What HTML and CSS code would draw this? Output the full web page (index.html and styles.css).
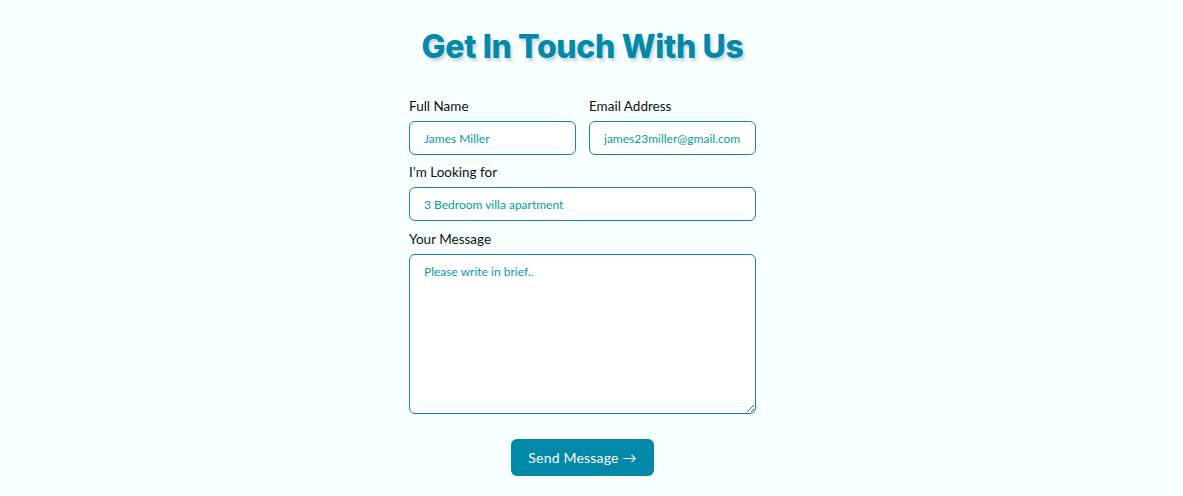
FILE: index.html
```html
<!DOCTYPE html>
<html lang="en">
<head>
<meta charset="utf-8">
<title>Get In Touch With Us</title>
<link rel="stylesheet" href="styles.css">
</head>
<body>
<main class="page">
  <h1 class="title">Get In Touch With Us</h1>
  <form class="form">
    <div class="row">
      <div class="field">
        <label class="label" for="name">Full Name</label>
        <input class="input" id="name" type="text" placeholder="James Miller">
      </div>
      <div class="field">
        <label class="label" for="email">Email Address</label>
        <input class="input" id="email" type="email" placeholder="james23miller@gmail.com">
      </div>
    </div>
    <div class="field">
      <label class="label" for="looking">I’m Looking for</label>
      <input class="input" id="looking" type="text" placeholder="3 Bedroom villa apartment">
    </div>
    <div class="field field-message">
      <label class="label" for="msg">Your Message</label>
      <textarea class="input textarea" id="msg" placeholder="Please write in brief.."></textarea>
    </div>
    <div class="actions">
      <button class="btn" type="button">Send Message →</button>
    </div>
  </form>
</main>
</body>
</html>
```
FILE: styles.css
```css
* { box-sizing: border-box; }
html, body { margin: 0; padding: 0; }
body {
  background: #f7ffff;
  font-family: "Lato", "Noto Sans", sans-serif;
  color: #000;
  padding-right: 18px;
}
.page {
  display: flex;
  flex-direction: column;
  align-items: center;
  padding-top: 27px;
}
.title {
  margin: 0;
  font-family: "Inter", sans-serif;
  font-weight: 800;
  font-size: 32px;
  line-height: 40px;
  color: #0288a8;
  text-shadow: 2px 3px 3px rgba(0, 60, 80, 0.2);
  letter-spacing: -0.35px;
}
.form {
  width: 347px;
  margin-top: 31px;
  display: flex;
  flex-direction: column;
  gap: 9px;
}
.row {
  display: flex;
  gap: 13px;
}
.row .field { flex: 1; }
.field {
  display: flex;
  flex-direction: column;
  gap: 7px;
}
.field-message { margin-top: 1px; }
.label {
  font-size: 13.5px;
  line-height: 16px;
  color: #111;
}
.input {
  height: 34px;
  border: 1px solid #1a84a0;
  border-radius: 6px;
  background: #fff;
  padding: 0 12px 0 14px;
  font-family: "Lato", "Noto Sans", sans-serif;
  font-size: 12px;
  color: #00a0a0;
  outline: none;
  width: 100%;
}
.input::placeholder { color: #00a19e; opacity: 1; }
.textarea {
  height: 160px;
  padding: 9px 14px;
  resize: vertical;
}
.actions {
  display: flex;
  justify-content: center;
  margin-top: 16px;
}
.btn {
  width: 143px;
  height: 37px;
  border: none;
  border-radius: 6px;
  background: #0288a8;
  color: #fff;
  font-family: "Lato", "Noto Sans", sans-serif;
  font-size: 14px;
  letter-spacing: 0.2px;
  cursor: pointer;
}
```
